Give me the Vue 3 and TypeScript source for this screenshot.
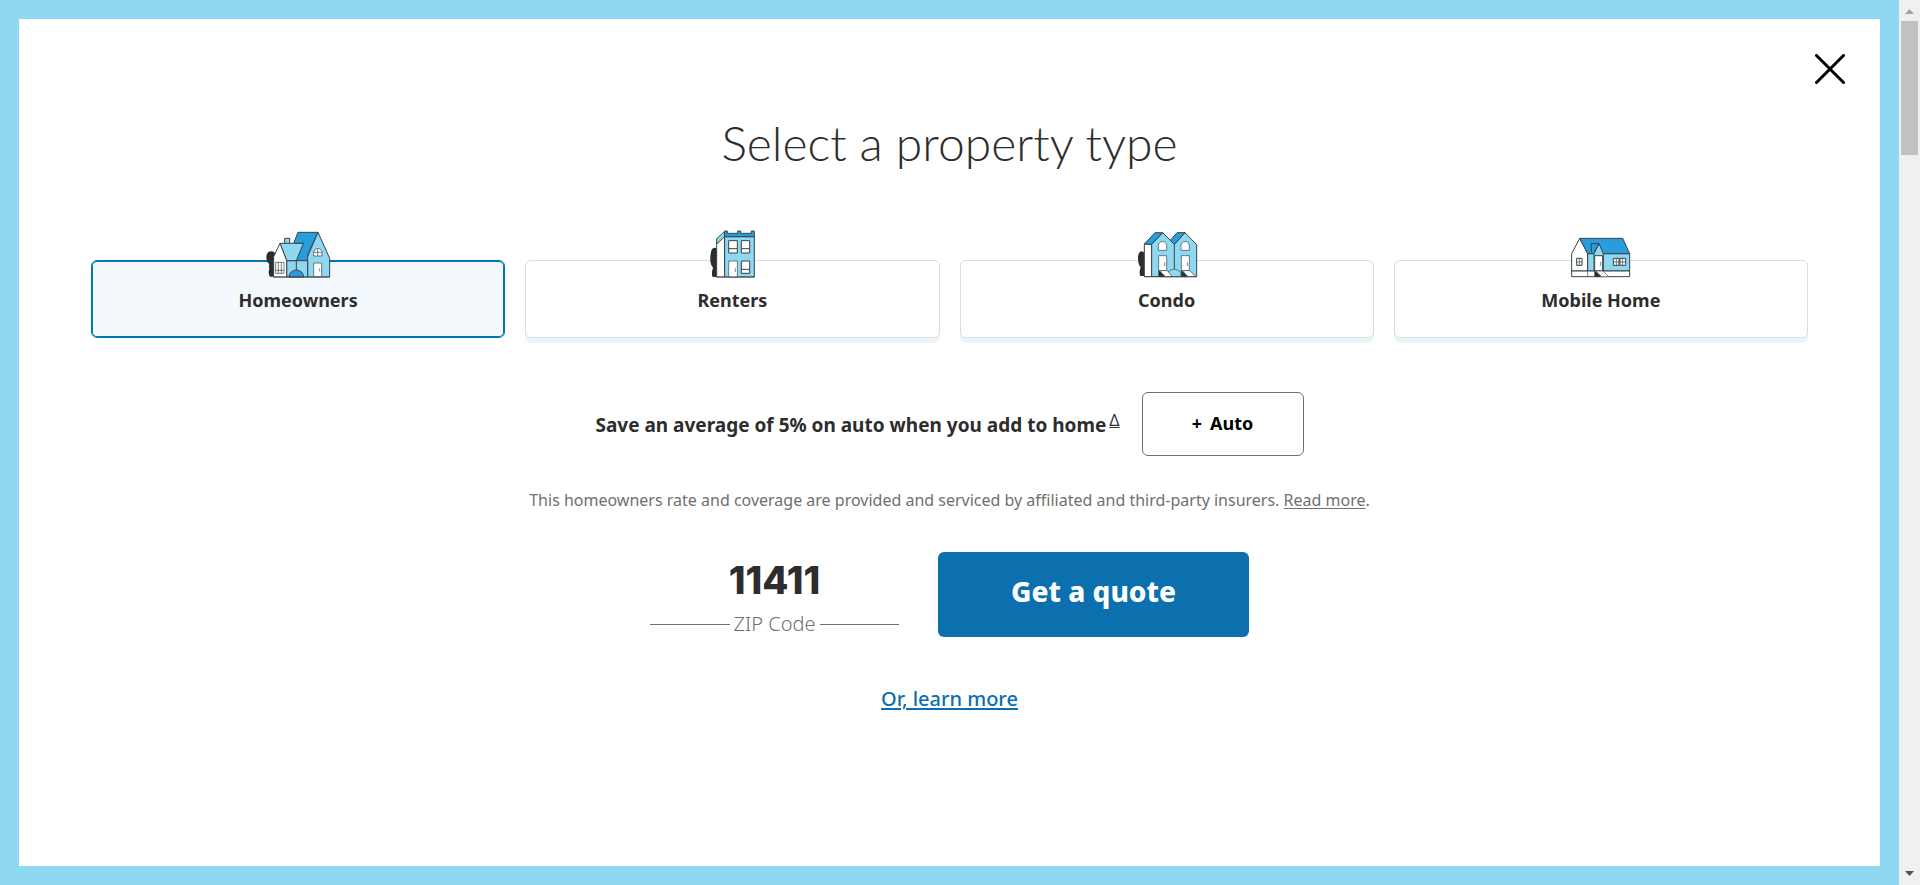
<script setup lang="ts">
import { ref } from 'vue'

type PropertyId = 'home' | 'renters' | 'condo' | 'mobile'

interface PropertyType {
  id: PropertyId
  label: string
  viewBox: string
}

const properties: PropertyType[] = [
  { id: 'home', label: 'Homeowners', viewBox: '36 30 216 144' },
  { id: 'renters', label: 'Renters', viewBox: '18 30 216 144' },
  { id: 'condo', label: 'Condo', viewBox: '33 30 216 144' },
  { id: 'mobile', label: 'Mobile Home', viewBox: '45 30 216 144' },
]

const selected = ref<PropertyId>('home')
const zip = ref('11411')
</script>

<template>
  <div class="window">
    <main class="frame">
      <section class="panel">
        <button class="close" type="button" aria-label="Close">
          <svg width="30" height="30" viewBox="0 0 30 30">
            <path d="M1.5 1.5 28.5 28.5M28.5 1.5 1.5 28.5" />
          </svg>
        </button>

        <h1>Select a property type</h1>

        <div class="cards" role="radiogroup" aria-label="Property type">
          <label
            v-for="p in properties"
            :key="p.id"
            class="card"
            :class="{ selected: selected === p.id }"
          >
            <input v-model="selected" type="radio" name="property" :value="p.id" />
            <svg class="art" width="72" height="48" :viewBox="p.viewBox" aria-hidden="true">
              <g v-if="p.id === 'home'">
                <path class="bush" d="M72 170H60q-7-10-2-24-2-6 0-14-9-6-9-20 0-18 15-18 9 0 14 10z" />
                <path class="mid" d="M144 37H204L174 100V122H139V96L160 70H131z" />
                <path class="light" d="M204 37 239 115V171H173V110z" />
                <path class="light" d="M104 55H119V71H104z" />
                <path class="light" d="M110 122H173V171H110z" />
                <path class="light" d="M90 70H160L139 122H110z" />
                <path class="white" d="M90 70 110 122V171H71V110z" />
                <path class="line" d="M139 122V150" />
                <path class="mid" d="M117 171a22 21 0 0 1 44 0z" />
                <path class="white fine" d="M77 127H102V160H77zM85 127V160M94 127V160M77 151H102" />
                <path class="white fine" d="M191 108V98a12 12 0 0 1 25 0V108zM203 86V108M191 97H216" />
                <path class="white fine" d="M191 129H215V170H191z" />
                <path class="line fine" d="M209 145V154M69 171H240" />
              </g>
              <g v-else-if="p.id === 'renters'">
                <path class="bush" d="M80 171H68q-5-10 1-28-9-10-8-28 0-32 13-32 8 0 8 12z" />
                <path class="white" d="M80 68 104 44V171H80z" />
                <path class="light" d="M80 56 104 34V50L80 72z" />
                <path class="light" d="M104 50H193V171H104z" />
                <path class="mid" d="M104 33H112V40H143V33H152V40H184V33H193V50H104z" />
                <path class="white" d="M116 62H142V99H116zM154 62H179V99H154zM154 123H179V160H154zM116 86H142M154 86H179M154 148H179" />
                <path class="white fine" d="M116 123H142V171H116z" />
                <path class="line fine" d="M136 145V156M79 171H194" />
              </g>
              <g v-else-if="p.id === 'condo'">
                <path class="bush" d="M72 168H61q-5-10 1-26-8-9-8-27 0-21 12-21 6 0 8 9z" />
                <path class="white" d="M73 72H95V170H73z" />
                <path class="light" d="M128 38 163 73 195 38 230 74V170H95V73z" />
                <path class="mid" d="M73 72 105 38H128L95 73zM151 61 171 38H195L163 73z" />
                <path class="white fine" d="M115 91V77a12 12 0 0 1 25 0V91zM183 91V77a12 12 0 0 1 25 0V91z" />
                <path class="white fine" d="M116 107H140V152H116zM184 107H208V152H184z" />
                <path class="line" d="M163 73V148" />
                <path class="line fine" d="M134 127V138M202 127V138" />
                <path class="light fine" d="M142 157q21-19 41 0v13H142z" />
                <path class="dark fine" d="M116 152V170H136L128 160zM184 152V170H204L196 160z" />
                <path class="white fine" d="M119 152H142L157 170H136zM187 152H210L227 170H204z" />
                <path class="line fine" d="M72 170H231" />
              </g>
              <g v-else>
                <path class="white" d="M65 101 89 55 113 101V153H65z" />
                <path class="light" d="M113 101H239V153H113z" />
                <path class="mid" d="M89 55H218L239 101H113z" />
                <path class="light" d="M132 101 147 71 160 101V153H132z" />
                <path class="line" d="M124 96V71H147L134 94" />
                <path class="white" d="M134 107H158V153H134z" />
                <path class="white" d="M80 115H96V136H80zM190 115H207V136H190zM210 115H227V136H210z" />
                <path class="line fine" d="M88 115V136M80 126H96M199 115V136M218 115V136M190 126H207M210 126H227" />
                <path class="white" d="M65 153H239V170H65z" />
                <path class="line fine" d="M152 126V137M113 153V170" />
                <path class="dark fine" d="M134 153V170H154L148 158z" />
                <path class="white fine" d="M137 153H159L176 170H154z" />
              </g>
            </svg>
            <span class="card-label">{{ p.label }}</span>
          </label>
        </div>

        <div class="bundle">
          <p class="save">Save an average of 5% on auto when you add to home<a class="note" href="#savings">Δ</a></p>
          <button class="auto" type="button"><span>+</span><span>Auto</span></button>
        </div>

        <p class="disclaimer">
          This homeowners rate and coverage are provided and serviced by affiliated and third-party insurers.
          <a href="#read-more">Read more</a>.
        </p>

        <form class="quote" @submit.prevent>
          <div class="zip">
            <input id="zip" v-model="zip" type="text" inputmode="numeric" maxlength="5" />
            <label for="zip">ZIP Code</label>
          </div>
          <button class="submit" type="submit">Get a quote</button>
        </form>

        <a class="learn" href="#learn-more">Or, learn more</a>
      </section>
    </main>

    <div class="scrollbar" aria-hidden="true">
      <svg class="arrow" width="9" height="5" viewBox="0 0 9 5"><path fill="#a3a3a3" d="M4.500 0 9 5H0z" /></svg>
      <div class="thumb"></div>
      <svg class="arrow" width="9" height="5" viewBox="0 0 9 5"><path fill="#505050" d="M0 0H9L4.500 5z" /></svg>
    </div>
  </div>
</template>

<style>
body {
  margin: 0;
}
</style>

<style scoped>
.window {
  display: flex;
  min-height: 100vh;
  font-family: 'Noto Sans', 'Open Sans', sans-serif;
  color: #2d2d2d;
}

.frame {
  display: flex;
  flex: 1;
  padding: 19px;
  background: #8fd8f2;
}

.panel {
  position: relative;
  flex: 1;
  display: flex;
  flex-direction: column;
  align-items: center;
  padding: 96px 72px 40px;
  background: #fff;
}

button {
  font-family: inherit;
  cursor: pointer;
}

.close {
  position: absolute;
  top: 35px;
  right: 35px;
  padding: 0;
  border: 0;
  background: none;
}

.close svg {
  display: block;
  fill: none;
  stroke: #000;
  stroke-width: 3;
  stroke-linecap: round;
}

h1 {
  margin: 0;
  font-family: Lato, 'Open Sans', sans-serif;
  font-size: 48px;
  line-height: 56px;
  font-weight: 300;
}

.cards {
  align-self: stretch;
  display: grid;
  grid-template-columns: repeat(4, 1fr);
  gap: 20px;
  margin-top: 89px;
}

.card {
  position: relative;
  display: flex;
  flex-direction: column;
  align-items: center;
  padding-bottom: 25px;
  border: 1px solid #cfe2e6;
  border-radius: 6px;
  background: #fff;
  box-shadow: 0 5px 0 #edf3f6;
  cursor: pointer;
}

.card.selected {
  border-color: #0077b3;
  background: #f4f9fd;
  box-shadow: inset 0 0 0 1px #0077b3;
}

.card input {
  position: absolute;
  inset: 0;
  width: 100%;
  height: 100%;
  margin: 0;
  opacity: 0;
  cursor: pointer;
}

.art {
  position: relative;
  margin-top: -31px;
  stroke: #3a4348;
  stroke-width: 3;
  stroke-linejoin: round;
}

.fine {
  stroke-width: 2;
}

.bush {
  fill: #2d2d2d;
  stroke: none;
}

.dark {
  fill: #2d2d2d;
}

.mid {
  fill: #279ddc;
}

.light {
  fill: #8fd8f2;
}

.white {
  fill: #fff;
}

.line {
  fill: none;
}

.card-label {
  margin-top: 10px;
  font-size: 18px;
  line-height: 24px;
  font-weight: 700;
}

.bundle {
  display: flex;
  align-items: center;
  gap: 22px;
  margin-top: 54px;
}

.save {
  margin: 2px 0 0;
  font-size: 19px;
  line-height: 28px;
  font-weight: 700;
}

.note {
  margin-left: 3px;
  font-size: 16px;
  line-height: 16px;
  font-weight: 400;
  vertical-align: 6px;
  color: inherit;
}

.auto {
  display: flex;
  align-items: center;
  justify-content: center;
  gap: 8px;
  width: 162px;
  height: 64px;
  padding: 0 0 2px;
  border: 1px solid #707070;
  border-radius: 6px;
  background: #fff;
  color: #000;
  font-size: 18px;
  font-weight: 700;
}

.disclaimer {
  margin: 32px 0 0;
  font-size: 16px;
  line-height: 24px;
  color: #707070;
}

.disclaimer a {
  color: inherit;
  text-underline-offset: 2px;
}

.quote {
  display: flex;
  gap: 39px;
  margin-top: 40px;
}

.zip {
  display: flex;
  flex-direction: column;
  width: 249px;
}

.zip input {
  height: 48px;
  margin-top: 4px;
  padding: 0;
  border: 0;
  background: none;
  outline: 0;
  text-align: center;
  font-family: Inter, 'Noto Sans', sans-serif;
  font-size: 38px;
  font-weight: 800;
  color: #2d2d2d;
}

.zip label {
  display: flex;
  align-items: center;
  gap: 4px;
  margin-top: 6px;
  font-size: 20px;
  line-height: 28px;
  font-weight: 300;
  color: #707070;
}

.zip label::before,
.zip label::after {
  content: '';
  flex: 1;
  height: 1px;
  background: #707070;
}

.submit {
  width: 311px;
  height: 85px;
  padding: 0 0 8px;
  border: 0;
  border-radius: 6px;
  background: #0c6fae;
  color: #fff;
  font-size: 28px;
  font-weight: 800;
}

.learn {
  margin-top: 47px;
  font-size: 20px;
  line-height: 28px;
  font-weight: 500;
  color: #0c6fae;
  text-decoration-thickness: 2px;
  text-underline-offset: 2px;
}

.scrollbar {
  display: flex;
  flex-direction: column;
  align-items: center;
  width: 21px;
  padding: 9px 0;
  box-sizing: border-box;
  background: #f0f0f0;
}

.arrow:last-child {
  margin-top: auto;
}

.thumb {
  width: 17px;
  height: 134px;
  margin-top: 7px;
  background: #c1c1c1;
}
</style>
